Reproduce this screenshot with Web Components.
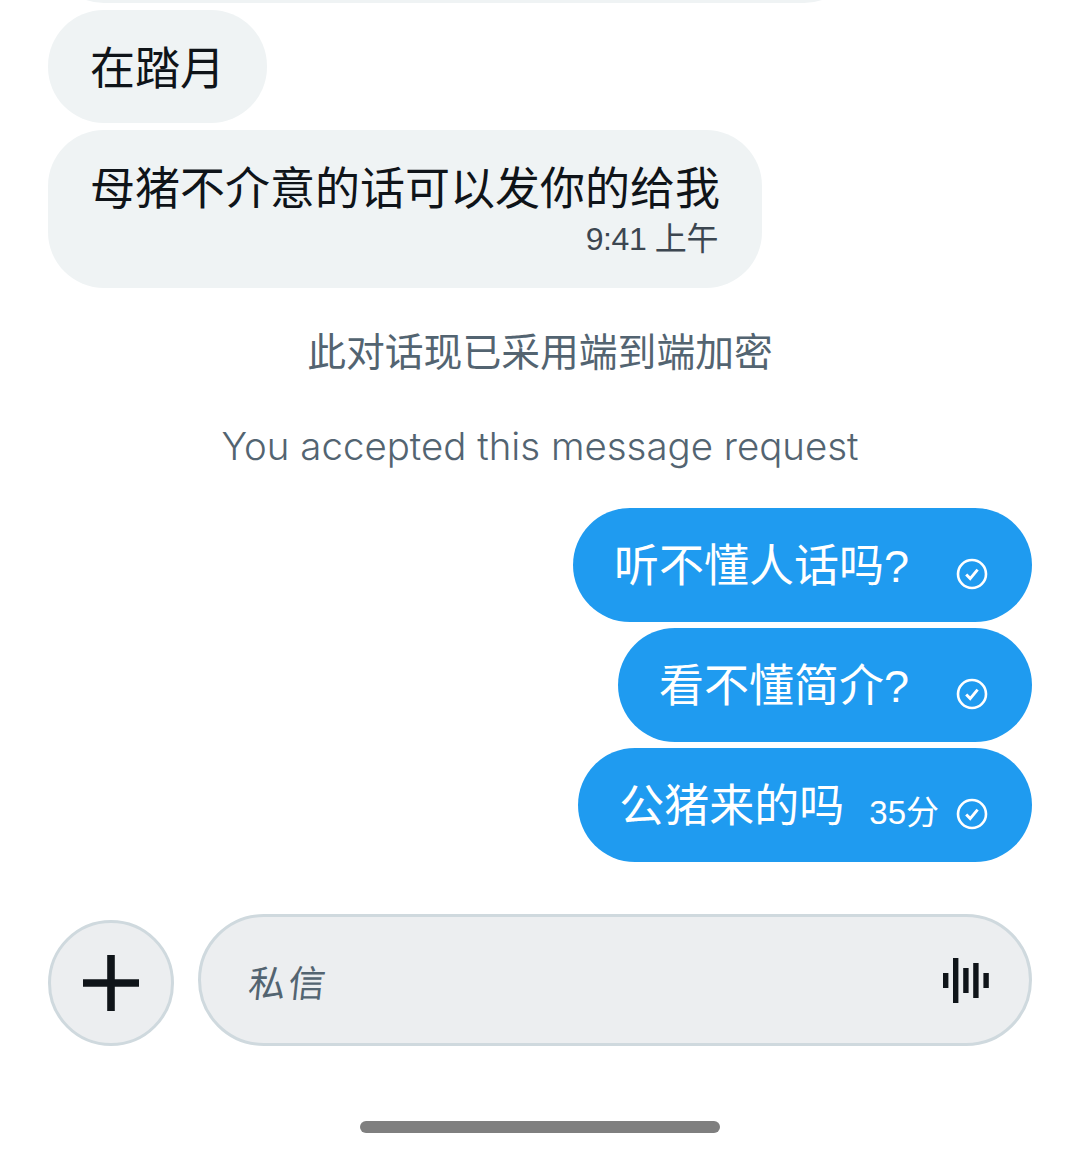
<!DOCTYPE html>
<html lang="zh">
<head>
<meta charset="utf-8">
<title>Chat</title>
<style>
  html, body { margin: 0; background: #fff; }
  body { height: 1154px; overflow: hidden; font-family: "Noto Sans CJK SC", "Noto Sans", sans-serif; }
</style>
</head>
<body>
<chat-view>
  <chat-bubble cut></chat-bubble>
  <chat-bubble>在踏月</chat-bubble>
  <chat-bubble time="9:41 上午">母猪不介意的话可以发你的给我</chat-bubble>
  <chat-notice style="margin-top:34px">此对话现已采用端到端加密</chat-notice>
  <chat-notice style="margin-top:43px" latin>You accepted this message request</chat-notice>
  <sent-bubble style="margin-top:35px">听不懂人话吗?</sent-bubble>
  <sent-bubble>看不懂简介?</sent-bubble>
  <sent-bubble time="35分">公猪来的吗</sent-bubble>
  <chat-composer placeholder="私信"></chat-composer>
  <home-bar></home-bar>
</chat-view>

<script>
class ChatView extends HTMLElement {
  constructor() {
    super();
    this.attachShadow({ mode: "open" });
  }
  connectedCallback() {
    this.shadowRoot.innerHTML = `
<style>
  :host { display: flex; flex-direction: column; padding: 0 48px; }
</style>
<slot></slot>`;
  }
}

// grey incoming message, "cut" is the one scrolled off the top
class ChatBubble extends HTMLElement {
  constructor() {
    super();
    this.attachShadow({ mode: "open" });
  }
  connectedCallback() {
    const time = this.getAttribute("time");
    this.shadowRoot.innerHTML = `
<style>
  :host { display: flex; align-self: flex-start; flex-direction: column; box-sizing: border-box;
    background: #eff3f4; color: #0f1419; border-radius: 56px; padding: 29px 42px 31px;
    margin-top: 7px; font-size: 45px; line-height: 53px; }
  :host([cut]) { margin: -110px 0 0; padding: 0; width: 812px; height: 113px; }
  :host([time]) { padding-bottom: 24px; }
  .time { align-self: flex-end; font-family: "Liberation Sans", "Noto Sans CJK SC", sans-serif; font-size: 32px;
    letter-spacing: -0.4px; line-height: 50px; margin: 2px 2px 0 0; color: #3c4650; }
</style>
<slot></slot>
${time ? `<span class="time">${time}</span>` : ""}`;
  }
}

class ChatNotice extends HTMLElement {
  constructor() {
    super();
    this.attachShadow({ mode: "open" });
  }
  connectedCallback() {
    this.shadowRoot.innerHTML = `
<style>
  :host { display: block; text-align: center; color: #536471; font-size: 38.8px; line-height: 54px; }
  :host([latin]) { font-family: Inter, sans-serif; font-size: 38.45px; font-weight: 300; }
</style>
<slot></slot>`;
  }
}

class SentBubble extends HTMLElement {
  constructor() {
    super();
    this.attachShadow({ mode: "open" });
  }
  connectedCallback() {
    const time = this.getAttribute("time");
    this.shadowRoot.innerHTML = `
<style>
  :host { display: flex; align-self: flex-end; align-items: center; box-sizing: border-box; height: 114px;
    background: #1f9bf0; color: #fff; border-radius: 57px; padding: 3px 44px 0 41px; margin-top: 6px;
    font-family: "Liberation Sans", "Noto Sans CJK SC", sans-serif; font-size: 45px; line-height: 53px; }
  .time { font-size: 33px; line-height: 40px; margin: 12px 0 0 25px; }
  svg { width: 32px; height: 32px; margin: 15px 0 0 47px; flex: none; }
  .time + svg { margin-left: 17px; }
</style>
<slot></slot>
${time ? `<span class="time">${time}</span>` : ""}
<svg viewBox="0 0 32 32" fill="none" stroke="#fff">
  <circle cx="16" cy="16" r="14" stroke-width="2.6"/>
  <path d="M10.2 16.4l4 4.2 7.4-9" stroke-width="2.9"/>
</svg>`;
  }
}

class ChatComposer extends HTMLElement {
  constructor() {
    super();
    this.attachShadow({ mode: "open" });
  }
  connectedCallback() {
    this.shadowRoot.innerHTML = `
<style>
  :host { display: flex; align-items: flex-end; gap: 24px; margin-top: 52px; }
  .add { display: flex; align-items: center; justify-content: center; box-sizing: border-box; flex: none;
    width: 126px; height: 126px; border: 3px solid #cfd9de; border-radius: 50%; background: #eceef0; }
  .field { display: flex; align-items: center; justify-content: space-between; box-sizing: border-box; flex: 1;
    height: 132px; padding: 0 40px 0 48px; border: 3px solid #cfd9de; border-radius: 66px; background: #eceef0; }
  .hint { display: inline-block; color: #536471; font-size: 37px; letter-spacing: 3px; line-height: 50px;
    margin-top: 1px; transform: skewX(-6deg); }
</style>
<div class="add">
  <svg width="56" height="56" viewBox="0 0 56 56" fill="#0f1419"><path d="M24.2 0h7.6v24.2H56v7.6H31.8V56h-7.6V31.8H0v-7.6h24.2z"/></svg>
</div>
<div class="field">
  <span class="hint">${this.getAttribute("placeholder")}</span>
  <svg width="46" height="45" viewBox="0 0 46 45" fill="#0f1419">
    <rect x="0" y="15" width="5.4" height="15"/>
    <rect x="10" y="0" width="5.4" height="45"/>
    <rect x="20.2" y="10" width="5.4" height="25"/>
    <rect x="30.2" y="5" width="5.4" height="35"/>
    <rect x="40.4" y="15" width="5.4" height="15"/>
  </svg>
</div>`;
  }
}

class HomeBar extends HTMLElement {
  constructor() {
    super();
    this.attachShadow({ mode: "open" });
  }
  connectedCallback() {
    this.shadowRoot.innerHTML = `
<style>
  :host { display: block; align-self: center; width: 360px; height: 12px; margin-top: 75px;
    border-radius: 6px; background: #7f7f7f; }
</style>`;
  }
}

customElements.define("chat-view", ChatView);
customElements.define("chat-bubble", ChatBubble);
customElements.define("chat-notice", ChatNotice);
customElements.define("sent-bubble", SentBubble);
customElements.define("chat-composer", ChatComposer);
customElements.define("home-bar", HomeBar);
</script>
</body>
</html>
